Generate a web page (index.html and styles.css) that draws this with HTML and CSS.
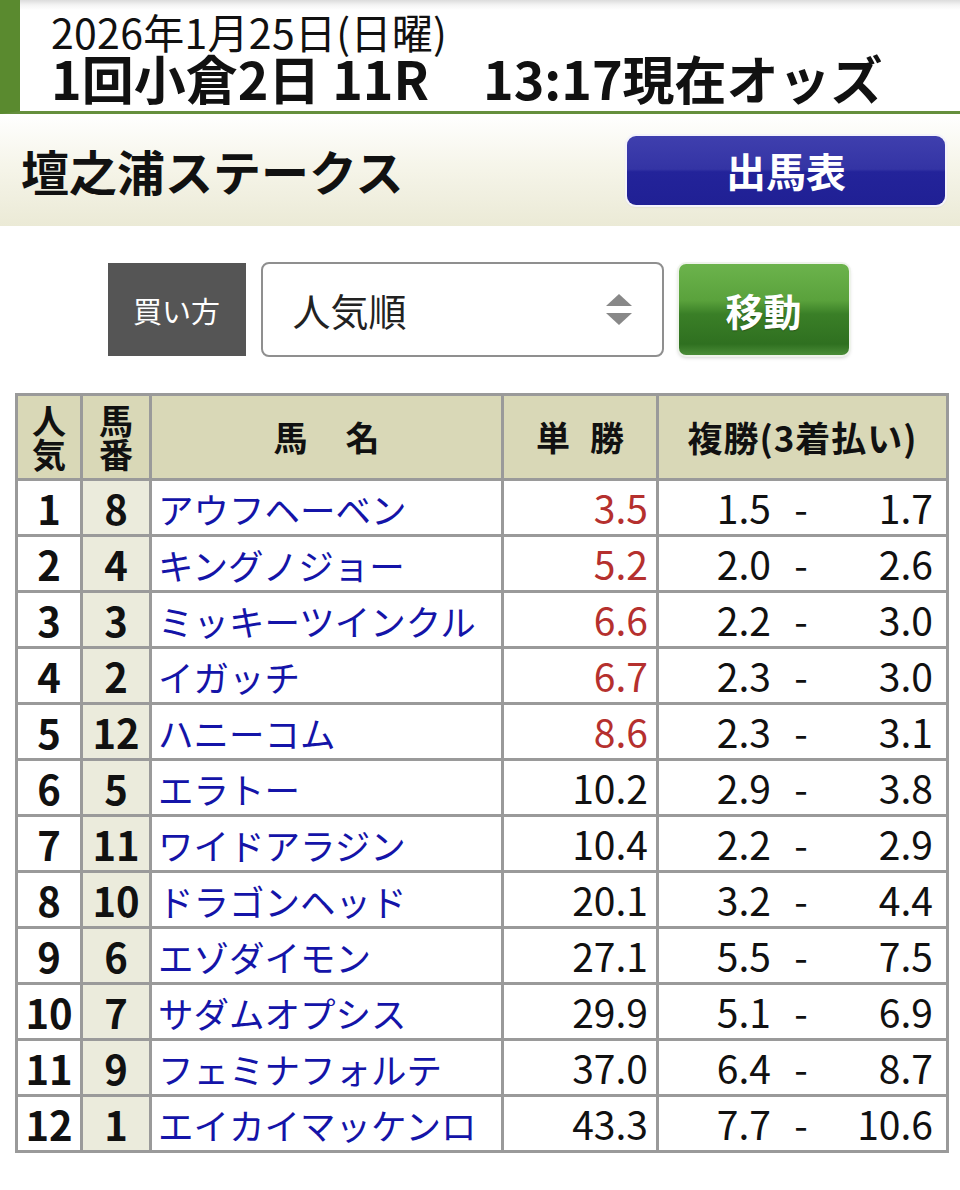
FILE: index.html
```html
<!DOCTYPE html>
<html lang="ja">
<head>
<meta charset="utf-8">
<title>オッズ 人気順</title>
<link rel="stylesheet" href="styles.css">
</head>
<body>
<header class="race-head">
  <div class="date">2026年1月25日(日曜)</div>
  <div class="race">1回小倉2日 11R<span class="now">13:17現在オッズ</span></div>
</header>
<section class="title-bar">
  <h1 class="race-name">壇之浦ステークス</h1>
  <a class="btn-blue" href="#">出馬表</a>
</section>
<form class="controls">
  <div class="label">買い方</div>
  <div class="select">
    <span class="select-text">人気順</span>
    <svg class="arrows" width="26" height="32" viewBox="0 0 26 32"><polygon points="13,0 26,12 0,12" fill="#888"/><polygon points="0,19 26,19 13,31" fill="#888"/></svg>
  </div>
  <a class="btn-green" href="#">移動</a>
</form>
<table class="odds">
  <colgroup>
    <col class="c1"><col class="c2"><col class="c3"><col class="c4"><col class="c5">
  </colgroup>
  <thead>
    <tr>
      <th class="stack"><span class="ln">人</span><span class="ln">気</span></th>
      <th class="stack"><span class="ln">馬</span><span class="ln">番</span></th>
      <th>馬<span class="sp-wide"></span>名</th>
      <th>単<span class="sp"></span>勝</th>
      <th class="wide">複勝(3着払い)</th>
    </tr>
  </thead>
  <tbody>
    <tr><td class="rank">1</td><td class="num">8</td><td class="name"><a href="#">アウフヘーベン</a></td><td class="win red">3.5</td><td class="place"><span class="lo">1.5</span><span class="dash">-</span><span class="hi">1.7</span></td></tr>
    <tr><td class="rank">2</td><td class="num">4</td><td class="name"><a href="#">キングノジョー</a></td><td class="win red">5.2</td><td class="place"><span class="lo">2.0</span><span class="dash">-</span><span class="hi">2.6</span></td></tr>
    <tr><td class="rank">3</td><td class="num">3</td><td class="name"><a href="#">ミッキーツインクル</a></td><td class="win red">6.6</td><td class="place"><span class="lo">2.2</span><span class="dash">-</span><span class="hi">3.0</span></td></tr>
    <tr><td class="rank">4</td><td class="num">2</td><td class="name"><a href="#">イガッチ</a></td><td class="win red">6.7</td><td class="place"><span class="lo">2.3</span><span class="dash">-</span><span class="hi">3.0</span></td></tr>
    <tr><td class="rank">5</td><td class="num">12</td><td class="name"><a href="#">ハニーコム</a></td><td class="win red">8.6</td><td class="place"><span class="lo">2.3</span><span class="dash">-</span><span class="hi">3.1</span></td></tr>
    <tr><td class="rank">6</td><td class="num">5</td><td class="name"><a href="#">エラトー</a></td><td class="win">10.2</td><td class="place"><span class="lo">2.9</span><span class="dash">-</span><span class="hi">3.8</span></td></tr>
    <tr><td class="rank">7</td><td class="num">11</td><td class="name"><a href="#">ワイドアラジン</a></td><td class="win">10.4</td><td class="place"><span class="lo">2.2</span><span class="dash">-</span><span class="hi">2.9</span></td></tr>
    <tr><td class="rank">8</td><td class="num">10</td><td class="name"><a href="#">ドラゴンヘッド</a></td><td class="win">20.1</td><td class="place"><span class="lo">3.2</span><span class="dash">-</span><span class="hi">4.4</span></td></tr>
    <tr><td class="rank">9</td><td class="num">6</td><td class="name"><a href="#">エゾダイモン</a></td><td class="win">27.1</td><td class="place"><span class="lo">5.5</span><span class="dash">-</span><span class="hi">7.5</span></td></tr>
    <tr><td class="rank">10</td><td class="num">7</td><td class="name"><a href="#">サダムオプシス</a></td><td class="win">29.9</td><td class="place"><span class="lo">5.1</span><span class="dash">-</span><span class="hi">6.9</span></td></tr>
    <tr><td class="rank">11</td><td class="num">9</td><td class="name"><a href="#">フェミナフォルテ</a></td><td class="win">37.0</td><td class="place"><span class="lo">6.4</span><span class="dash">-</span><span class="hi">8.7</span></td></tr>
    <tr><td class="rank">12</td><td class="num">1</td><td class="name"><a href="#">エイカイマッケンロ</a></td><td class="win">43.3</td><td class="place"><span class="lo">7.7</span><span class="dash">-</span><span class="hi">10.6</span></td></tr>
  </tbody>
</table>
</body>
</html>
```
FILE: styles.css
```css
* { box-sizing: border-box; }
html, body { margin: 0; padding: 0; background: #fff; }
body {
  font-family: "Noto Sans CJK JP", "Noto Sans", sans-serif;
  color: #111;
  width: 960px;
}

.race-head {
  height: 114px;
  border-left: 20px solid #5a8a2f;
  border-bottom: 3px solid #658f3d;
  padding: 10px 0 0 31px;
  background: linear-gradient(to bottom, #dcdcdc 0, #f4f4f4 5px, #fff 10px);
}
.date {
  font-size: 41px;
  line-height: 42px;
  font-weight: 400;
  color: #111;
  white-space: nowrap;
  letter-spacing: 0.3px;
}
.race {
  font-size: 52px;
  line-height: 52px;
  font-weight: 700;
  color: #111;
  white-space: nowrap;
}
.now { margin-left: 54px; }

.title-bar {
  height: 112px;
  display: flex;
  align-items: center;
  justify-content: space-between;
  padding: 0 15px 0 21px;
  background: linear-gradient(to bottom, #ffffff 0%, #f6f5ea 45%, #ebead6 100%);
}
.race-name {
  margin: 0;
  font-size: 48px;
  line-height: 1;
  font-weight: 700;
  color: #111;
}
.btn-blue {
  width: 318px;
  height: 69px;
  border-radius: 9px;
  display: flex;
  align-items: center;
  justify-content: center;
  color: #fff;
  text-decoration: none;
  font-size: 40px;
  font-weight: 700;
  background: linear-gradient(to bottom, #3f3fae 0%, #3434a4 48%, #23239a 52%, #202094 100%);
  box-shadow: 0 0 0 2px #f4f3fb, 0 1px 3px rgba(0,0,0,.25);
}

.controls {
  margin: 36px 0 0 0;
  padding-right: 4px;
  display: flex;
  justify-content: center;
  align-items: center;
  gap: 15px;
  height: 95px;
}
.label {
  width: 138px;
  height: 93px;
  background: #555;
  color: #fff;
  font-size: 29px;
  display: flex;
  align-items: center;
  justify-content: center;
}
.select {
  width: 403px;
  height: 95px;
  border: 2px solid #8f8f8f;
  border-radius: 8px;
  display: flex;
  align-items: center;
  justify-content: space-between;
  padding: 0 30px 0 30px;
  background: #fff;
}
.select-text {
  font-size: 38px;
  color: #222;
}
.btn-green {
  width: 170px;
  height: 91px;
  border-radius: 7px;
  display: flex;
  align-items: center;
  justify-content: center;
  color: #fff;
  text-decoration: none;
  font-size: 38px;
  font-weight: 700;
  text-shadow: 0 1px 1px rgba(0,0,0,.3);
  background: linear-gradient(to bottom, #6cb34c 0%, #5aa23c 40%, #3a7f27 55%, #2f7020 88%, #4b8d38 100%);
  box-shadow: 0 0 0 2px #eef3ea, 0 2px 4px rgba(0,0,0,.25);
}

.odds {
  margin: 36px 0 0 15px;
  width: 931px;
  border-collapse: collapse;
  table-layout: fixed;
  border: 3px solid #9a9a9a;
}
.c1 { width: 65px; }
.c2 { width: 69px; }
.c3 { width: 352px; }
.c4 { width: 155px; }
.c5 { width: 290px; }

.odds th, .odds td {
  border: 3px solid #9a9a9a;
  padding: 0;
}
.odds th {
  background: #d9d8b7;
  height: 85px;
  font-size: 34px;
  font-weight: 700;
  color: #111;
  text-align: center;
  line-height: 1.1;
}
.odds th.stack { line-height: 34px; }
.odds th .ln { display: block; }
.odds th.wide { letter-spacing: 1px; font-size: 35px; }
.sp-wide { display: inline-block; width: 38px; }
.sp { display: inline-block; width: 20px; }

.odds td {
  height: 56px;
  font-size: 39px;
  line-height: 1;
}
.rank {
  text-align: center;
  font-weight: 700;
  font-size: 40px !important;
}
.num {
  text-align: center;
  font-weight: 700;
  font-size: 40px !important;
  background: #ebebdc;
}
.name { padding-left: 6px !important; white-space: nowrap; overflow: hidden; }
.name a {
  color: #1414a8;
  text-decoration: none;
  font-size: 35.5px;
}
.win {
  text-align: right;
  padding-right: 8px !important;
  color: #111;
}
.win.red { color: #b5302e; }
.place {
  color: #111;
}
.place .lo,
.place .dash,
.place .hi { display: inline-block; }
.place .lo { width: 112px; text-align: right; }
.place .dash { width: 60px; text-align: center; }
.place .hi { width: 102px; text-align: right; }
```
